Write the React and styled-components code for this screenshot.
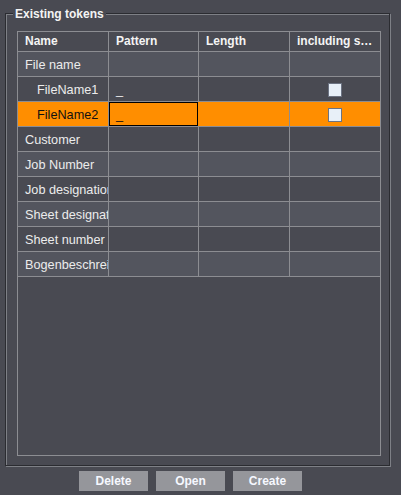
import React from "react";
import styled, { createGlobalStyle } from "styled-components";

const GlobalStyle = createGlobalStyle`
  html, body {
    margin: 0;
    padding: 0;
    background: #494a52;
  }
  body {
    font-family: "Liberation Sans", Arial, sans-serif;
    color: #ececec;
  }
`;

const rows = [
  { name: "File name", level: 0 },
  { name: "FileName1", level: 1, pattern: "_", check: true },
  { name: "FileName2", level: 1, pattern: "_", check: true, selected: true },
  { name: "Customer", level: 0 },
  { name: "Job Number", level: 0 },
  { name: "Job designation", level: 0 },
  { name: "Sheet designation", level: 0 },
  { name: "Sheet number", level: 0 },
  { name: "Bogenbeschreibung", level: 0 },
];

const columns = "91px 90px 91px minmax(0, 1fr)";

export default function App() {
  return (
    <Page>
      <GlobalStyle />
      <Group>
        <GroupTitle>Existing tokens</GroupTitle>
        <Table>
          <HeaderRow>
            <HeadCell>Name</HeadCell>
            <HeadCell>Pattern</HeadCell>
            <HeadCell>Length</HeadCell>
            <HeadCell $last>including subfolders</HeadCell>
          </HeaderRow>
          {rows.map((row, i) => (
            <Row key={row.name} $even={i % 2 === 0} $selected={row.selected}>
              <Cell $indent={row.level}>{row.name}</Cell>
              {row.selected ? (
                <EditorCell>{row.pattern}</EditorCell>
              ) : (
                <Cell>{row.pattern}</Cell>
              )}
              <Cell />
              <CheckCell $last>{row.check && <CheckBox />}</CheckCell>
            </Row>
          ))}
        </Table>
      </Group>
      <ButtonBar>
        <Button>Delete</Button>
        <Button>Open</Button>
        <Button>Create</Button>
      </ButtonBar>
    </Page>
  );
}

const Page = styled.div`
  width: 401px;
  height: 495px;
  padding: 13px 0 0 5px;
  box-sizing: border-box;
`;

const Group = styled.div`
  position: relative;
  width: 385px;
  height: 453px;
  box-sizing: border-box;
  border: 1px solid #2b2c31;
  box-shadow: inset 1px 1px 0 #7e8086, 1px 1px 0 #7e8086;
  padding: 17px 0 0 11px;
`;

const GroupTitle = styled.span`
  position: absolute;
  top: -7px;
  left: 7px;
  padding: 0 2px 0 2px;
  background: #494a52;
  color: #f4f4f4;
  font-size: 12px;
  font-weight: bold;
  line-height: 14px;
`;

const Table = styled.div`
  width: 364px;
  height: 425px;
  box-sizing: border-box;
  border: 1px solid #8c8d92;
  overflow: hidden;
`;

const HeaderRow = styled.div`
  display: grid;
  grid-template-columns: ${columns};
  height: 20px;
  border-bottom: 1px solid #8c8d92;
  box-sizing: border-box;
`;

const HeadCell = styled.div`
  padding: 0 6px 0 7px;
  border-right: ${(p) => (p.$last ? "none" : "1px solid #8c8d92")};
  font-size: 12px;
  line-height: 19px;
  font-weight: bold;
  color: #f4f4f4;
  overflow: hidden;
  white-space: nowrap;
  text-overflow: ellipsis;
  min-width: 0;
`;

const Row = styled.div`
  display: grid;
  grid-template-columns: ${columns};
  height: 25px;
  box-sizing: border-box;
  border-bottom: 1px solid #8c8d92;
  background: ${(p) =>
    p.$selected ? "#ff8e00" : p.$even ? "#53555e" : "#494a52"};
  color: ${(p) => (p.$selected ? "#111" : "#ececec")};
`;

const Cell = styled.div`
  display: flex;
  align-items: center;
  padding-left: ${(p) => 7 + (p.$indent || 0) * 12}px;
  padding-top: 1px;
  border-right: ${(p) => (p.$last ? "none" : "1px solid #8c8d92")};
  font-size: 12.7px;
  white-space: nowrap;
  overflow: hidden;
  min-width: 0;
`;

const EditorCell = styled.div`
  display: flex;
  align-items: center;
  padding: 1px 0 0 6px;
  border: 1px solid #000;
  font-size: 12.7px;
  margin-right: 1px;
`;

const CheckCell = styled(Cell)`
  justify-content: center;
  padding-left: 0;
`;

const CheckBox = styled.div`
  width: 12px;
  height: 12px;
  border: 1px solid #6c7382;
  background: #e8f0f8;
`;

const ButtonBar = styled.div`
  display: flex;
  gap: 8px;
  padding: 5px 0 0 74px;
`;

const Button = styled.div`
  width: 69px;
  height: 20px;
  background: #95969b;
  color: #f6f8ff;
  font-size: 12px;
  font-weight: bold;
  display: flex;
  align-items: center;
  justify-content: center;
`;
